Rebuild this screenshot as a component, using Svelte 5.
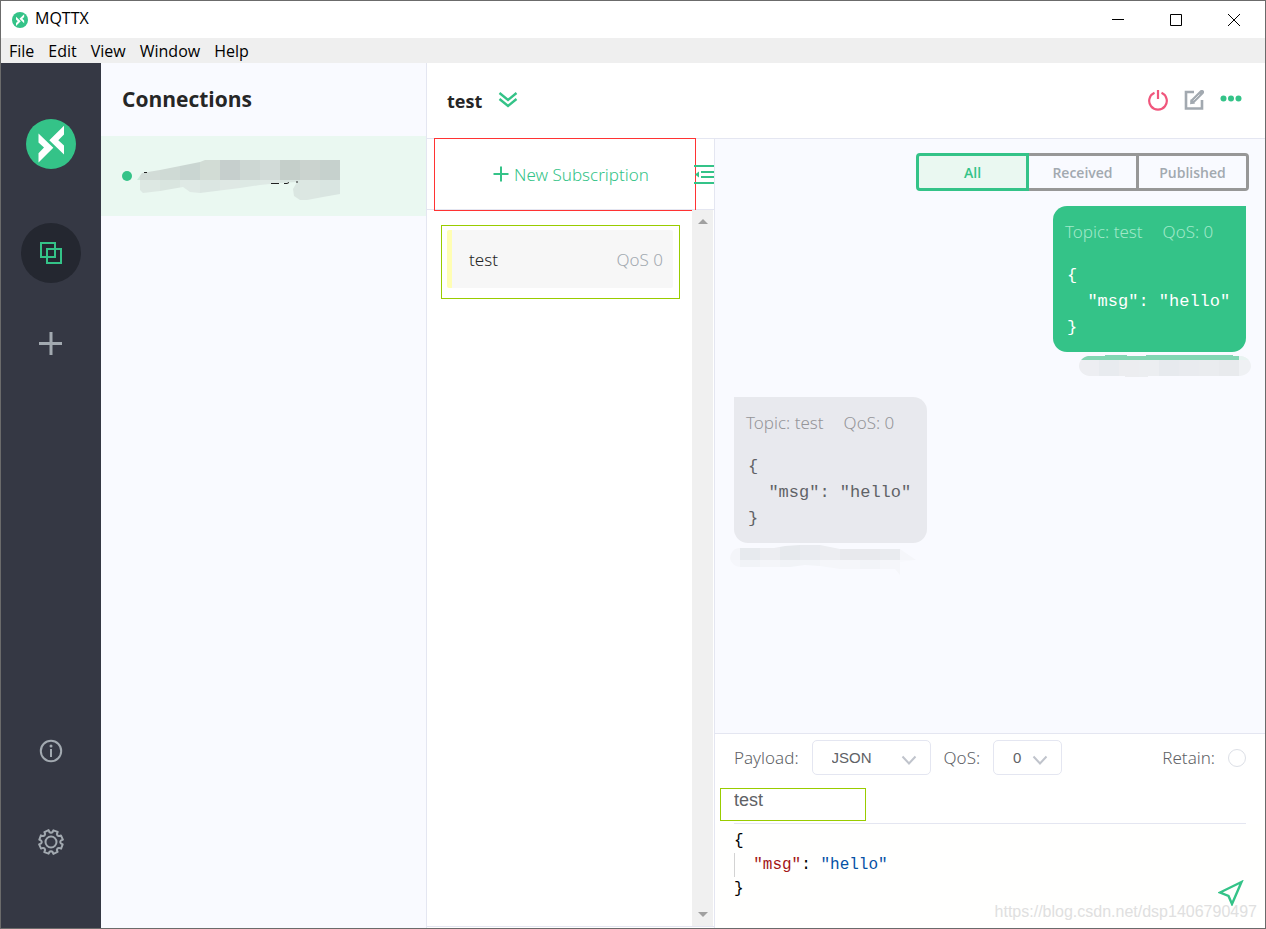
<script lang="ts">
  type Cell = { x: number; y: number; w: number; h: number; fill: string };

  /** Menu entries of the window */
  const menus = ['File', 'Edit', 'View', 'Window', 'Help'];

  const filters = ['All', 'Received', 'Published'];

  const payload = ['{', '  "msg": "hello"', '}'];

  const messages = [
    { id: 1, out: true, topic: 'test', qos: 0 },
    { id: 2, out: false, topic: 'test', qos: 0 },
  ];

  let filter = $state('All');
  let topic = $state('test');
  let format = $state('JSON');
  let qos = $state('0');

  /** Turns a list of colours into a row of mosaic cells */
  function row(colors: string[], x: number, y: number, h: number): Cell[] {
    return colors.map((fill, i) => ({ x: x + i * 20, y, w: 20, h, fill }));
  }

  const nameCells = [
    ...row(['#ccebdd'], -17, 0, 20),
    ...row(['#d2dcd7', '#cfdad5', '#cad6d2', '#d2dcd5', '#c6cfcd', '#cdd7d3', '#d2dbd8', '#c5cfca', '#cbd3cf', '#c6d1cd'], 3, 0, 20),
    ...row(['#dde8e3', '#d9e5df', '#dfe9e5', '#dbe6e2', '#dfe8e4', '#dde9e4', '#dfe9e5', '#dae6e1', '#dce7e2', '#d9e5e1'], 3, 20, 20),
  ];

  const outCells = [
    ...row(['#edeef2', '#e8ebef', '#ecedf0', '#eceef1', '#e7eaee', '#e9ebef', '#eaecef', '#e8eaed', '#eff1f4'], 0, 0, 22),
    { x: 0, y: 0, w: 160, h: 5, fill: '#82d6b3' },
    { x: 160, y: 0, w: 12, h: 5, fill: '#e8f3f1' },
  ];

  const inCells = [
    ...row(['#f4f5f9', '#e7eaee', '#ecedf1', '#e6e9ed', '#e9ebf0', '#ecedf1', '#e8e9ed', '#e8e9ed', '#e9ebef', '#f5f6fa'], -10, 0, 15),
    ...row(['#f5f6fb', '#f1f3f7', '#f4f5f9', '#f1f3f7', '#f2f4f8', '#f5f6fa', '#f5f6fa', '#f2f4f8', '#f5f6fa', '#f7f8fd'], -10, 15, 15),
  ];

  /** Outline of the settings cog, eight teeth around (13, 13) */
  function cog() {
    const pts: string[] = [];
    for (let i = 0; i < 8; i++) {
      const mid = 22.5 + i * 45;
      for (const [r, a] of [[9.2, -22.5], [9.9, -14], [11.9, -11], [12.1, 11], [9.9, 14]]) {
        const t = ((mid + a - 90) * Math.PI) / 180;
        pts.push(`${(13 + r * Math.cos(t)).toFixed(2)} ${(13 + r * Math.sin(t)).toFixed(2)}`);
      }
    }
    return `M${pts.join('L')}Z`;
  }
</script>

{#snippet cells(list: Cell[])}
  {#each list as c}
    <rect x={c.x} y={c.y} width={c.w} height={c.h} fill={c.fill} />
  {/each}
{/snippet}

{#snippet chevron()}
  <svg class="chevron" width="16" height="10" viewBox="0 0 16 10" aria-hidden="true">
    <path d="M1.5 1.5 8 8.5l6.5-7" fill="none" stroke="#c0c4cc" stroke-width="2" />
  </svg>
{/snippet}

{#snippet logo(size: number)}
  <svg width={size} height={size} viewBox="0 0 50 50" aria-hidden="true">
    <circle cx="25" cy="25" r="25" fill="#34c388" />
    <path d="M12.5 14.5 27.3 28.7 12.5 43.5V34.2L18 28.6 12.5 23.500Z" fill="#fff" />
    <path d="M38 6.700 23.300 21.300 38 35.500V26.500L32.300 21.200 38 15.500Z" fill="#fff" />
  </svg>
{/snippet}

<div class="window">
  <header class="titlebar">
    {@render logo(16)}
    <span class="app-name">MQTTX</span>
    <div class="window-buttons">
      <button aria-label="Minimize">
        <svg width="12" height="12" viewBox="0 0 12 12"><path d="M0 5.5h12" /></svg>
      </button>
      <button aria-label="Maximize">
        <svg width="12" height="12" viewBox="0 0 12 12"><path d="M.5.5h11v11H.5Z" /></svg>
      </button>
      <button aria-label="Close">
        <svg width="12" height="12" viewBox="0 0 12 12"><path d="m0 0 12 12M12 0 0 12" /></svg>
      </button>
    </div>
  </header>

  <nav class="menubar">
    {#each menus as menu}
      <button>{menu}</button>
    {/each}
  </nav>

  <div class="body">
    <aside class="rail">
      <div class="logo">{@render logo(50)}</div>
      <button class="active" aria-label="Connections">
        <svg width="22" height="22" viewBox="0 0 22 22">
          <path d="M1 1h14v14H1ZM7 7h14v14H7Z" />
        </svg>
      </button>
      <button aria-label="New connection">
        <svg width="24" height="24" viewBox="0 0 24 24">
          <path d="M12 0v23M0 11.500h23" stroke-width="3" />
        </svg>
      </button>
      <button class="push" aria-label="About">
        <svg width="24" height="24" viewBox="0 0 24 24">
          <circle cx="12" cy="12" r="10.2" />
          <circle class="dot" cx="12" cy="7" r="1.5" />
          <path d="M12 10v8" />
        </svg>
      </button>
      <button aria-label="Settings">
        <svg width="26" height="26" viewBox="0 0 26 26">
          <path d={cog()} stroke-linejoin="round" />
          <circle cx="13" cy="13" r="5.5" />
        </svg>
      </button>
    </aside>

    <section class="connections">
      <h1>Connections</h1>
      <div class="connection">
        <span class="status"></span>
        <svg width="203" height="40" viewBox="0 0 203 40" aria-hidden="true">
          <clipPath id="name-shape">
            <path d="M0 20 5 13 23 10 43 6 63 2 68 0H203V34L186 37 170 40H163L157 36 156 29 160 22 143 23 123 25 103 28 63 33 53 32 46 27 23 31 6 33 3 30V20Z" />
          </clipPath>
          <g clip-path="url(#name-shape)">{@render cells(nameCells)}</g>
          <path d="M134 23.5h8M147 23.5h3l2-1M159 22h2M7 12.500h3" fill="none" stroke="#222" />
        </svg>
      </div>
    </section>

    <main>
      <header class="topbar">
        <h2>test</h2>
        <button aria-label="Expand">
          <svg width="20" height="18" viewBox="0 0 20 18">
            <path d="m1.500 1 8.500 7 8.500-7M1.500 7 10 14l8.500-7" fill="none" stroke="#34c388" stroke-width="2.400" />
          </svg>
        </button>
        <div class="actions">
          <button aria-label="Disconnect">
            <svg width="20" height="24" viewBox="0 0 20 24">
              <path d="M6.500 3.800a8.800 8.800 0 1 0 7 0M10 1v9" fill="none" stroke="#f0567c" stroke-width="2.200" />
            </svg>
          </button>
          <button aria-label="Edit">
            <svg width="20" height="22" viewBox="0 0 20 22">
              <path d="M10 2H2v16.500h16V10" fill="none" stroke="#a2a9b0" stroke-width="2.600" />
              <path d="M17.800 2.200 8.800 11.200" fill="none" stroke="#a2a9b0" stroke-width="4.600" stroke-linecap="round" />
              <path d="M6.800 9 6 14.200l5.200-.8Z" fill="#a2a9b0" />
              <path d="m9.500 10.500 6-6" fill="none" stroke="#fff" stroke-opacity=".7" />
            </svg>
          </button>
          <button aria-label="More">
            <svg width="22" height="24" viewBox="0 0 22 24" fill="#34c388">
              <circle cx="3.500" cy="9.500" r="3" /><circle cx="11" cy="9.500" r="3" /><circle cx="18.500" cy="9.500" r="3" />
            </svg>
          </button>
        </div>
      </header>

      <div class="columns">
        <section class="subs">
          <div class="subs-head">
            <button class="new-sub">
              <svg width="16" height="16" viewBox="0 0 16 16">
                <path d="M8 .5v15M.5 8h15" stroke="#34c388" stroke-width="2" />
              </svg>
              New Subscription
            </button>
            <button class="collapse" aria-label="Hide subscriptions">
              <svg width="20" height="20" viewBox="0 0 20 20">
                <path d="M0 2h20M7 8h13M7 13h13M0 19h20" stroke="#34c388" stroke-width="2" />
                <path d="m1 10.500 4-3v6Z" fill="#34c388" />
              </svg>
            </button>
          </div>
          <div class="subs-body">
            <ul>
              <li>
                <div class="sub">
                  <span>test</span>
                  <span class="sub-qos">QoS 0</span>
                </div>
              </li>
            </ul>
            <div class="scrollbar">
              <svg width="10" height="5" viewBox="0 0 10 5"><path d="m0 5 5-5 5 5Z" /></svg>
              <svg width="10" height="5" viewBox="0 0 10 5"><path d="m0 0 5 5 5-5Z" /></svg>
            </div>
          </div>
        </section>

        <section class="chat">
          <div class="messages">
            <div class="filters">
              {#each filters as name}
                <button class:selected={filter === name} onclick={() => (filter = name)}>{name}</button>
              {/each}
            </div>
            {#each messages as m (m.id)}
              <article class:out={m.out}>
                <div class="bubble">
                  <p><span>Topic: {m.topic}</span><span>QoS: {m.qos}</span></p>
                  <pre>{payload.join('\n')}</pre>
                </div>
                {#if m.out}
                  <svg class="time" width="172" height="22" viewBox="0 0 172 22" aria-hidden="true">
                    <clipPath id="out-shape">
                      <path d="M9 1H26V0H48V1H67V0H154V1H162C168 2 172 6 172 11S168 20 161 21H69V22H46V21H10C4 20 0 16 0 11S4 2 9 1Z" />
                    </clipPath>
                    <g clip-path="url(#out-shape)">{@render cells(outCells)}</g>
                  </svg>
                {:else}
                  <svg class="time" width="186" height="30" viewBox="0 0 186 30" aria-hidden="true">
                    <clipPath id="in-shape">
                      <path d="M0 13C1 7 4 3 10 3H44L55 1 70 0H90L110 4H170L186 15 170 17V30L165 24H110L90 21 75 20 60 22H10C4 21 1 18 0 13Z" />
                    </clipPath>
                    <g clip-path="url(#in-shape)">{@render cells(inCells)}</g>
                  </svg>
                {/if}
              </article>
            {/each}
          </div>

          <footer>
            <div class="options">
              <label for="format">Payload:</label>
              <div class="select wide">
                <select id="format" bind:value={format}>
                  <option>JSON</option>
                  <option>Plaintext</option>
                </select>
                {@render chevron()}
              </div>
              <label for="qos">QoS:</label>
              <div class="select">
                <select id="qos" bind:value={qos}>
                  <option>0</option>
                  <option>1</option>
                  <option>2</option>
                </select>
                {@render chevron()}
              </div>
              <label class="retain">Retain: <input type="radio" name="retain" /></label>
            </div>
            <div class="topic">
              <input type="text" aria-label="Topic" bind:value={topic} />
            </div>
            <div class="editor">
              <pre><span>{'{'}</span>
<span class="guide">{'  '}<span class="key">"msg"</span>: <span class="string">"hello"</span></span>
<span>{'}'}</span></pre>
              <button class="send" aria-label="Send">
                <svg width="26" height="26" viewBox="0 0 26 26">
                  <path d="M23.500 2 2 12.500l8.500 3.500 3.500 8Z" fill="none" stroke="#34c388" stroke-width="2.400" />
                </svg>
              </button>
              <span class="watermark">https://blog.csdn.net/dsp1406790497</span>
            </div>
          </footer>
        </section>
      </div>
    </main>
  </div>
</div>

<style>
  :global(body) {
    margin: 0;
  }

  .window {
    box-sizing: border-box;
    display: flex;
    flex-direction: column;
    min-height: 100vh;
    border: 1px solid #6b6b6b;
    background: #fff;
    color: #606266;
    font-family: 'Noto Sans', 'Open Sans', sans-serif;
    font-size: 17px;
    font-weight: 300;
  }

  button {
    padding: 0;
    border: 0;
    background: none;
    color: inherit;
    font: inherit;
    cursor: pointer;
  }

  svg {
    display: block;
    flex: none;
  }

  .titlebar {
    display: flex;
    align-items: center;
    height: 37px;
    padding: 0 2px 0 11px;
    color: #000;
    font-family: 'Open Sans', sans-serif;
    font-size: 16px;
    font-weight: 400;
  }

  .app-name {
    margin-left: 7px;
    line-height: 35px;
    align-self: flex-start;
  }

  .window-buttons {
    display: flex;
    margin-left: auto;
  }

  .window-buttons button {
    display: grid;
    place-items: center;
    width: 58px;
    height: 36px;
  }

  .window-buttons path {
    fill: none;
    stroke: #000;
  }

  .menubar {
    display: flex;
    gap: 14px;
    height: 25px;
    padding-left: 8px;
    background: #efefef;
    color: #000;
    font-family: 'Open Sans', sans-serif;
    font-size: 16px;
    font-weight: 400;
  }

  .body {
    display: flex;
    flex: 1;
  }

  .rail {
    display: flex;
    flex-direction: column;
    align-items: center;
    gap: 31px;
    box-sizing: border-box;
    width: 100px;
    padding: 56px 0;
    background: #353844;
  }

  .rail .logo {
    margin-bottom: 23px;
  }

  .rail button {
    display: grid;
    place-items: center;
    width: 60px;
    height: 60px;
    border-radius: 50%;
  }

  .rail button svg {
    fill: none;
    stroke: #a2a9b0;
    stroke-width: 2;
  }

  .rail button .dot {
    fill: #a2a9b0;
    stroke: none;
  }

  .rail .active {
    background: #242730;
  }

  .rail .active svg {
    stroke: #34c388;
  }

  .rail .push {
    margin-top: auto;
  }

  .connections {
    width: 325px;
    background: #f9faff;
  }

  h1 {
    margin: 0;
    padding-left: 21px;
    color: #262626;
    font-family: 'Open Sans', sans-serif;
    font-size: 21px;
    line-height: 73px;
  }

  .connection {
    display: flex;
    align-items: center;
    gap: 5px;
    height: 80px;
    padding-left: 21px;
    background: #eaf8f1;
  }

  .connection svg {
    margin-top: 8px;
  }

  .status {
    width: 10px;
    height: 10px;
    border-radius: 50%;
    background: #34c388;
  }

  main {
    display: flex;
    flex: 1;
    flex-direction: column;
    min-width: 0;
    border-left: 1px solid #e4e6f1;
  }

  .topbar {
    display: flex;
    align-items: center;
    gap: 16px;
    height: 75px;
    padding: 0 23px 0 20px;
    border-bottom: 1px solid #e4e6f1;
  }

  h2 {
    margin: 0;
    color: #262626;
    font-family: 'Open Sans', sans-serif;
    font-size: 18px;
  }

  .actions {
    display: flex;
    align-items: center;
    gap: 16px;
    margin-left: auto;
  }

  .columns {
    display: flex;
    flex: 1;
  }

  .subs {
    display: flex;
    flex-direction: column;
    width: 287px;
    border-right: 1px solid #e4e6f1;
  }

  .subs-head {
    display: flex;
    align-items: center;
    height: 70px;
    border-bottom: 1px solid #e4e6f1;
    color: #34c388;
  }

  .new-sub {
    display: flex;
    align-items: center;
    justify-content: center;
    gap: 5px;
    box-sizing: border-box;
    width: 262px;
    height: 73px;
    margin: 0 -2px 0 7px;
    padding-left: 12px;
    border: 1px solid #ff3333;
  }

  .subs-body {
    display: flex;
    flex: 1;
    margin-bottom: 1px;
    border-bottom: 1px solid #e4e6f1;
  }

  ul {
    flex: 1;
    margin: 0;
    padding: 15px 12px 0 14px;
    list-style: none;
  }

  li {
    padding: 4px 6px 10px 5px;
    border: 1px solid #99cc00;
  }

  .sub {
    display: flex;
    align-items: center;
    justify-content: space-between;
    height: 58px;
    padding: 0 10px 0 17px;
    border-left: 5px solid #fffeb3;
    border-radius: 2px;
    background: #f7f7f7;
    color: #262626;
  }

  .sub-qos {
    color: #a2a9b0;
  }

  .scrollbar {
    display: flex;
    flex-direction: column;
    align-items: center;
    justify-content: space-between;
    box-sizing: border-box;
    width: 21px;
    margin-right: 1px;
    padding: 9px 0;
    background: #f0f0f0;
    fill: #a0a0a0;
  }

  .chat {
    display: flex;
    flex: 1;
    flex-direction: column;
    min-width: 0;
  }

  .messages {
    flex: 1;
    padding: 14px 19px 0;
    background: #f9faff;
  }

  .filters {
    display: flex;
    justify-content: flex-end;
    margin-right: -3px;
    margin-bottom: 15px;
  }

  .filters button {
    box-sizing: border-box;
    width: 110px;
    height: 38px;
    border: solid #979797;
    border-width: 3px 3px 3px 0;
    color: #a2a9b0;
    font-family: 'Open Sans', sans-serif;
    font-size: 14px;
    font-weight: 600;
  }

  .filters button:first-child {
    width: 113px;
    border-left-width: 3px;
    border-radius: 4px 0 0 4px;
  }

  .filters button:last-child {
    border-radius: 0 4px 4px 0;
  }

  .filters .selected {
    border-color: #34c388;
    background: #eaf8f1;
    color: #34c388;
  }

  article {
    display: flex;
    flex-direction: column;
    align-items: flex-start;
    margin-bottom: 20px;
  }

  .bubble {
    box-sizing: border-box;
    width: 193px;
    height: 146px;
    padding: 13px 12px;
    border-radius: 0 14px 14px 14px;
    background: #e8e9ee;
    color: #606266;
  }

  .bubble p {
    display: flex;
    gap: 20px;
    margin: 0 0 19px;
    color: #959599;
    line-height: 25px;
    white-space: nowrap;
  }

  .bubble pre {
    margin: 0;
    padding-left: 2px;
    font-family: 'Liberation Mono', monospace;
    font-size: 17px;
    line-height: 26px;
  }

  .out {
    align-items: flex-end;
  }

  .out .bubble {
    border-radius: 14px 0 14px 14px;
    background: #34c388;
    color: #fff;
  }

  .out .bubble p {
    color: #a0e8c8;
  }

  .time {
    margin: 2px 0 0 -4px;
  }

  .out .time {
    margin: 3px -5px 0 0;
  }

  footer {
    border-top: 1px solid #e4e6f1;
  }

  .options {
    display: flex;
    align-items: center;
    gap: 13px;
    padding: 6px 19px 13px;
  }

  .select {
    position: relative;
    width: 69px;
  }

  .wide {
    width: 119px;
  }

  select {
    display: block;
    box-sizing: border-box;
    width: 100%;
    height: 35px;
    padding: 0 19px;
    border: 1px solid #e4e6f1;
    border-radius: 5px;
    appearance: none;
    background: #fff;
    color: #606266;
    font: 15px 'Liberation Sans', sans-serif;
  }

  .chevron {
    position: absolute;
    top: 15px;
    right: 14px;
    pointer-events: none;
  }

  .retain {
    display: flex;
    align-items: center;
    gap: 13px;
    margin-left: auto;
  }

  .retain input {
    width: 18px;
    height: 18px;
    margin: 0;
    border: 1px solid #dcdfe6;
    border-radius: 50%;
    appearance: none;
    background: #fff;
  }

  .topic {
    position: relative;
    margin: 0 19px;
    border-bottom: 1px solid #e4e6f1;
  }

  /* highlight around the topic name */
  .topic::before {
    content: '';
    position: absolute;
    left: -14px;
    box-sizing: border-box;
    width: 146px;
    height: 33px;
    border: 1px solid #99cc00;
    pointer-events: none;
  }

  .topic input {
    display: block;
    box-sizing: border-box;
    width: 100%;
    height: 35px;
    padding: 0 0 10px;
    border: 0;
    outline: 0;
    background: none;
    color: #606266;
    font: 18px 'Liberation Sans', sans-serif;
  }

  .editor {
    position: relative;
    box-sizing: border-box;
    min-height: 104px;
    padding: 5px 19px;
    background: #fffffe;
  }

  .editor pre {
    margin: 0;
    color: #000;
    font-family: 'Liberation Mono', monospace;
    font-size: 16px;
    line-height: 24px;
  }

  .guide {
    display: inline-block;
    box-shadow: inset 1px 0 #d3d3d3;
  }

  .key {
    color: #a31515;
  }

  .string {
    color: #0451a5;
  }

  .send {
    position: absolute;
    right: 21px;
    bottom: 22px;
  }

  .watermark {
    position: absolute;
    right: 8px;
    bottom: 7px;
    color: #e0e0e0;
    font: 16px 'Liberation Sans', sans-serif;
    pointer-events: none;
  }
</style>
